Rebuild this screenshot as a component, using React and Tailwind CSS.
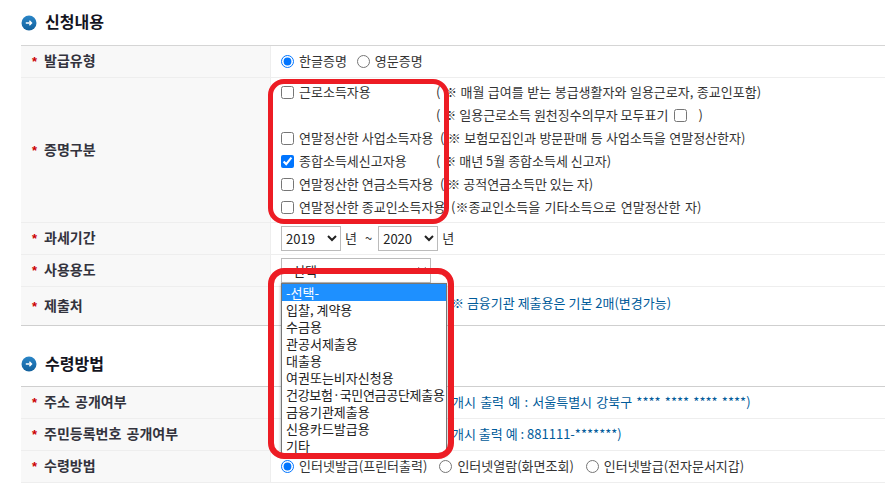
const FONT = "font-['Noto_Sans_CJK_KR','Noto_Sans',sans-serif]";

function SectionIcon() {
  return (
    <svg width="16" height="16" viewBox="0 0 16 16" className="shrink-0">
      <defs>
        <linearGradient id="sectionBlue" x1="0" y1="0" x2="0" y2="1">
          <stop offset="0" stopColor="#2a86c8" />
          <stop offset="1" stopColor="#12609c" />
        </linearGradient>
      </defs>
      <circle cx="8" cy="8" r="7.5" fill="url(#sectionBlue)" />
      <path d="M4.8 8h5.6M8.4 5.8 10.6 8l-2.2 2.2" fill="none" stroke="#fff" strokeWidth="1.3" />
    </svg>
  );
}

function Heading({ children, className }) {
  return (
    <div className={`flex items-center gap-[8px] ${className}`}>
      <SectionIcon />
      <h2 className="pb-[3px] text-[16px] leading-none font-bold text-[#14141e]">{children}</h2>
    </div>
  );
}

function Row({ label, height, border = "border-[#eeeeee]", children }) {
  return (
    <div className={`flex border-b ${border}`} style={{ height }}>
      <div className="flex w-[249px] shrink-0 items-center bg-[#f8f8f8] pl-[11px] text-[14px] font-bold text-[#33333d] [word-spacing:2px]">
        <span className="mr-[7px] text-[13px] leading-none text-[#cc0000] font-['Liberation_Sans']">*</span>
        <span className="pb-[3px]">{label}</span>
      </div>
      <div className="flex min-w-0 flex-1 items-center border-l border-[#eeeeee] pl-[10px] whitespace-nowrap">
        {children}
      </div>
    </div>
  );
}

function Radio({ checked, name, children, className = "" }) {
  return (
    <label className={`flex items-center ${className}`}>
      <input type="radio" name={name} defaultChecked={checked} className="m-0 h-[13px] w-[13px]" />
      <span className="ml-[5px] pb-[2px]">{children}</span>
    </label>
  );
}

function CheckLine({ checked, label, note, labelWidth = "w-[155px]", noteClass = "" }) {
  return (
    <div className="flex h-[23px] items-center">
      <label className={`flex shrink-0 items-center ${labelWidth}`}>
        <input type="checkbox" defaultChecked={checked} className="m-0 h-[13px] w-[13px]" />
        <span className="ml-[5px] pb-[2px]">{label}</span>
      </label>
      <span className={`pb-[2px] ${noteClass}`}>{note}</span>
    </div>
  );
}

const uses = ["입찰, 계약용", "수금용", "관공서제출용", "대출용", "여권또는비자신청용", "건강보험·국민연금공단제출용", "금융기관제출용", "신용카드발급용", "기타"];

export default function App() {
  return (
    <div className={`relative h-[484px] w-[885px] overflow-hidden bg-white pl-[21px] text-[13px] leading-[18px] text-[#333333] ${FONT}`}>
      <Heading className="h-[45px]">신청내용</Heading>
      <div className="border-t border-[#d5d5d5]">
        <Row label="발급유형" height="32px">
          <Radio name="type" checked>한글증명</Radio>
          <Radio name="type" className="ml-[10px]">영문증명</Radio>
        </Row>
        <Row label="증명구분" height="145px">
          <div className="flex flex-col">
            <CheckLine label="근로소득자용" noteClass="[word-spacing:0.6px]" note="( ※ 매월 급여를 받는 봉급생활자와 일용근로자, 종교인포함)" />
            <div className="flex h-[23px] items-center pl-[155px]">
              <span className="pb-[1px]">( ※ 일용근로소득 원천징수의무자 모두표기</span>
              <input type="checkbox" className="ml-[6px] mr-[5px] h-[13px] w-[13px]" />
              <span className="ml-[6px] pb-[1px]">)</span>
            </div>
            <CheckLine label="연말정산한 사업소득자용" labelWidth="w-[159px]" noteClass="[word-spacing:0.5px]" note="( ※ 보험모집인과 방문판매 등 사업소득을 연말정산한자)" />
            <CheckLine checked label="종합소득세신고자용" note="( ※ 매년 5월 종합소득세 신고자)" />
            <CheckLine label="연말정산한 연금소득자용" labelWidth="w-[159px]" note="( ※ 공적연금소득만 있는 자)" />
            <CheckLine label="연말정산한 종교인소득자용" labelWidth="w-[170px]" noteClass="[word-spacing:1.5px]" note="(※종교인소득을 기타소득으로 연말정산한 자)" />
          </div>
        </Row>
        <Row label="과세기간" height="32px">
          <select defaultValue="2019" className="h-[25px] w-[60px] border border-[#bbbbbb] bg-white text-[#222222]">
            <option>2019</option>
            <option>2020</option>
          </select>
          <span className="ml-[4px] pb-[2px]">년</span>
          <span className="ml-[8px] pb-[2px]">~</span>
          <select defaultValue="2020" className="ml-[6px] h-[25px] w-[60px] border border-[#bbbbbb] bg-white text-[#222222]">
            <option>2019</option>
            <option>2020</option>
          </select>
          <span className="ml-[4px] pb-[2px]">년</span>
        </Row>
        <Row label="사용용도" height="32px">
          <select className="h-[25px] w-[150px] border border-[#bbbbbb] bg-white pl-[7px] text-[#222222]">
            <option>선택</option>
          </select>
        </Row>
        <Row label="제출처" height="39px" border="border-[#cfcfcf]">
          <span className="ml-[170px] pb-[6px] text-[#005b9a]">※ 금융기관 제출용은 기본 2매(변경가능)</span>
        </Row>
      </div>

      <Heading className="h-[60px] pt-[16px]">수령방법</Heading>
      <div className="border-t border-[#cfcfcf]">
        <Row label="주소 공개여부" height="32px">
          <span className="ml-[171px] pb-[2px] text-[#005b9a] [word-spacing:1.3px]">개시 출력 예 : 서울특별시 강북구 **** **** **** ****)</span>
        </Row>
        <Row label="주민등록번호 공개여부" height="32px">
          <span className="ml-[171px] pb-[2px] text-[#005b9a]">개시 출력 예 : 881111-*******)</span>
        </Row>
        <Row label="수령방법" height="32px">
          <Radio name="receive" checked>인터넷발급(프린터출력)</Radio>
          <Radio name="receive" className="ml-[12px]">인터넷열람(화면조회)</Radio>
          <Radio name="receive" className="ml-[12px]">인터넷발급(전자문서지갑)</Radio>
        </Row>
      </div>

      <ul className="absolute top-[283px] left-[281px] w-[166px] border border-[#767676] bg-white text-[13px] leading-[17px] text-[#222222] shadow-[0_1px_3px_rgba(0,0,0,0.35)]">
        <li className="bg-[#1e90ff] pl-[4px] text-white">-선택-</li>
        {uses.map((u) => (
          <li key={u} className={`pl-[4px] whitespace-nowrap ${u.includes("·") ? "tracking-[-0.3px]" : ""}`}>{u}</li>
        ))}
      </ul>

      <div className="pointer-events-none absolute top-[79px] left-[268px] h-[145px] w-[181px] rounded-[16px] border-[5px] border-[#ed1c24]" />
      <div className="pointer-events-none absolute top-[268px] left-[268px] h-[191px] w-[186px] rounded-[16px] border-[6px] border-[#ed1c24]" />
    </div>
  );
}
